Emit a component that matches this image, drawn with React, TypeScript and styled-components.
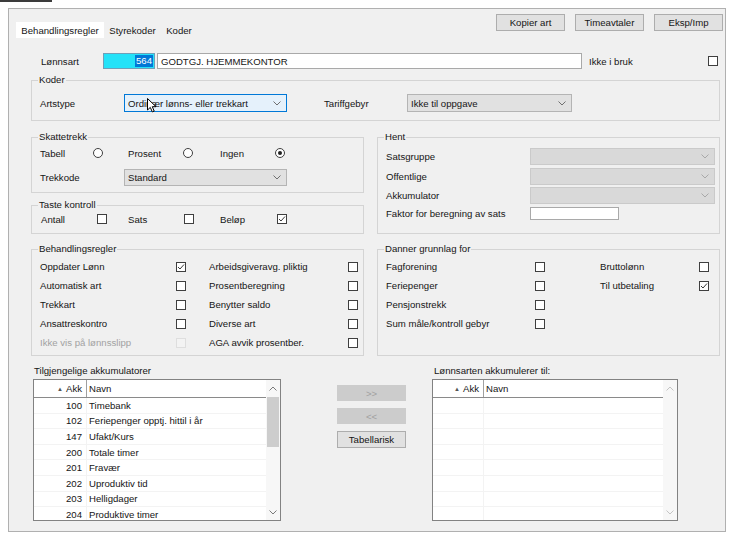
import React from "react";
import styled, { createGlobalStyle } from "styled-components";

const GlobalStyle = createGlobalStyle`
  html, body { margin: 0; padding: 0; background: #ffffff; }
  body {
    font-family: "Liberation Sans", Arial, sans-serif;
    font-size: 9.6px;
    color: #151515;
  }
  * { box-sizing: border-box; }
`;

const Screen = styled.div`
  width: 733px;
  height: 539px;
  overflow: hidden;
  background: #ffffff;
`;

const TitleStub = styled.div`
  width: 52px;
  height: 2px;
  background: #3c3c3c;
`;

const Window = styled.div`
  margin: 6px 0 0 8px;
  width: 718px;
  height: 524px;
  border: 1px solid #b0b0b0;
  background: #f0f0f0;
  display: flex;
  flex-direction: column;
`;

const Header = styled.div`
  display: flex;
  justify-content: space-between;
  align-items: flex-start;
  height: 29px;
  padding: 0 2px 0 7px;
`;

const Tabs = styled.div`
  display: flex;
  margin-top: 13px;
`;

const Tab = styled.div<{ $active?: boolean; $w: number }>`
  width: ${(p) => p.$w}px;
  height: 16px;
  display: flex;
  align-items: center;
  justify-content: center;
  background: ${(p) => (p.$active ? "#ffffff" : "transparent")};
`;

const Toolbar = styled.div`
  display: flex;
  gap: 10px;
  margin-top: 5px;
`;

const ToolButton = styled.button`
  width: 69px;
  height: 17px;
  padding: 0;
  border: 1px solid #adadad;
  background: #e1e1e1;
  font: inherit;
  color: #151515;
`;

const Content = styled.div`
  display: flex;
  flex-direction: column;
  padding: 0 5px 0 22px;
`;

const FieldRow = styled.div`
  display: flex;
  align-items: center;
  height: 16px;
  margin-top: 15px;
  padding-left: 10px;
`;

const RowLabel = styled.span<{ $w: number; $ml?: number }>`
  flex: none;
  width: ${(p) => p.$w}px;
  margin-left: ${(p) => p.$ml ?? 0}px;
  white-space: nowrap;
`;

const CodeInput = styled.div`
  flex: none;
  width: 52px;
  height: 16px;
  display: flex;
  align-items: center;
  justify-content: flex-end;
  padding-right: 1px;
  background: #24e2f8;
  border: 1px solid #6f9fb8;
`;

const SelectedText = styled.span`
  background: #0078d7;
  color: #ffffff;
  line-height: 12px;
  padding: 0 1px;
`;

const TextInput = styled.div<{ $w: number; $h?: number; $ml?: number }>`
  flex: none;
  width: ${(p) => p.$w}px;
  height: ${(p) => p.$h ?? 16}px;
  margin-left: ${(p) => p.$ml ?? 0}px;
  display: flex;
  align-items: center;
  padding-left: 3px;
  background: #ffffff;
  border: 1px solid #a9a9a9;
  white-space: nowrap;
`;

const Spacer = styled.span`
  flex: 1;
`;

const Group = styled.fieldset<{ $pt: number; $pb: number }>`
  margin: 0;
  min-width: 0;
  border: 1px solid #d4d4d4;
  padding: ${(p) => p.$pt}px 5px ${(p) => p.$pb}px 8px;
`;

const Legend = styled.legend`
  padding: 0 1px;
  margin-left: -2px;
  line-height: 12px;
  font-size: 9.6px;
`;

const KoderGroup = styled(Group)`
  margin-top: 5px;
`;

const InlineRow = styled.div<{ $h: number }>`
  display: flex;
  align-items: center;
  height: ${(p) => p.$h}px;
`;

type ComboVariant = "hover" | "normal" | "disabled";

const comboBg: Record<ComboVariant, string> = {
  hover: "#e5f1fb",
  normal: "#e1e1e1",
  disabled: "#d9d9d9",
};
const comboBorder: Record<ComboVariant, string> = {
  hover: "#0078d7",
  normal: "#b4b4b4",
  disabled: "#cacaca",
};

const ComboBox = styled.div<{ $w: number; $h: number; $v: ComboVariant }>`
  position: relative;
  flex: none;
  width: ${(p) => p.$w}px;
  height: ${(p) => p.$h}px;
  display: flex;
  align-items: center;
  justify-content: space-between;
  padding: 0 5px 0 3px;
  background: ${(p) => comboBg[p.$v]};
  border: 1px solid ${(p) => comboBorder[p.$v]};
  white-space: nowrap;
`;

const Cursor = styled.svg`
  position: absolute;
  left: 22px;
  top: 3px;
`;

const Chevron = ({ color = "#7a7a7a", up = false }: { color?: string; up?: boolean }) => (
  <svg width="8" height="5" viewBox="0 0 8 5">
    <polyline
      points={up ? "0.5,4.5 4,1 7.5,4.5" : "0.5,0.5 4,4 7.5,0.5"}
      fill="none"
      stroke={color}
      strokeWidth="1"
    />
  </svg>
);

const Combo = ({
  w,
  h,
  v,
  text,
  cursor,
}: {
  w: number;
  h: number;
  v: ComboVariant;
  text?: string;
  cursor?: boolean;
}) => (
  <ComboBox $w={w} $h={h} $v={v}>
    <span>{text}</span>
    <Chevron color={v === "disabled" ? "#a8a8a8" : "#6f6f6f"} />
    {cursor && (
      <Cursor width="11" height="15" viewBox="0 0 11 15">
        <path
          d="M0.5,0.5 L0.5,12 L3.3,9.4 L5.3,13.9 L7.2,13.1 L5.3,8.7 L9,8.7 Z"
          fill="#ffffff"
          stroke="#000000"
          strokeWidth="1"
          strokeLinejoin="round"
        />
      </Cursor>
    )}
  </ComboBox>
);

const Columns = styled.div<{ $mt: number }>`
  display: grid;
  grid-template-columns: 333px 343px;
  column-gap: 13px;
  margin-top: ${(p) => p.$mt}px;
  align-items: stretch;
`;

const Stack = styled.div`
  display: flex;
  flex-direction: column;
  gap: 6px;
`;

const OptionRow = styled.div<{ $pl?: number }>`
  display: flex;
  align-items: center;
  height: 14px;
  padding-left: ${(p) => p.$pl ?? 0}px;
`;

const OptionLabel = styled.span<{ $w: number }>`
  flex: none;
  width: ${(p) => p.$w}px;
`;

const OptionGap = styled.span<{ $w: number }>`
  flex: none;
  width: ${(p) => p.$w}px;
`;

const Box = styled.span<{ $disabled?: boolean }>`
  flex: none;
  width: 10px;
  height: 10px;
  display: inline-flex;
  align-items: center;
  justify-content: center;
  background: ${(p) => (p.$disabled ? "#f3f3f3" : "#ffffff")};
  border: 1px solid ${(p) => (p.$disabled ? "#dedede" : "#3f3f3f")};
`;

const CheckBox = ({ checked, disabled }: { checked?: boolean; disabled?: boolean }) => (
  <Box $disabled={disabled}>
    {checked && (
      <svg width="8" height="8" viewBox="0 0 8 8">
        <polyline points="1,4 3,6 7,1.5" fill="none" stroke="#3a3a3a" strokeWidth="1" />
      </svg>
    )}
  </Box>
);

const RadioCircle = styled.span`
  flex: none;
  width: 10px;
  height: 10px;
  border-radius: 50%;
  border: 1px solid #3f3f3f;
  background: #ffffff;
  display: inline-flex;
  align-items: center;
  justify-content: center;
`;

const RadioDot = styled.span`
  width: 4px;
  height: 4px;
  border-radius: 50%;
  background: #222;
`;

const Radio = ({ checked }: { checked?: boolean }) => (
  <RadioCircle>{checked && <RadioDot />}</RadioCircle>
);

const TrekkodeRow = styled(InlineRow)`
  margin-top: 9px;
`;

const HentRows = styled.div`
  display: flex;
  flex-direction: column;
  gap: 2.5px;
`;

const CheckGrid = styled.div<{ $cols: string }>`
  display: grid;
  grid-template-columns: ${(p) => p.$cols};
  grid-auto-rows: 19px;
  align-items: center;
`;

const GridLabel = styled.span<{ $disabled?: boolean }>`
  white-space: nowrap;
  color: ${(p) => (p.$disabled ? "#a2a2a2" : "#151515")};
`;

const Empty = styled.span``;

const ListsRow = styled.div`
  display: flex;
  align-items: flex-start;
  margin-top: 9px;
`;

const ListColumn = styled.div<{ $ml: number }>`
  display: flex;
  flex-direction: column;
  margin-left: ${(p) => p.$ml}px;
`;

const ListCaption = styled.div<{ $pl: number }>`
  height: 12px;
  line-height: 12px;
  margin-bottom: 2px;
  padding-left: ${(p) => p.$pl}px;
`;

const ListBox = styled.div<{ $w: number }>`
  width: ${(p) => p.$w}px;
  height: 142px;
  display: flex;
  overflow: hidden;
  background: #ffffff;
  border: 1px solid #828282;
`;

const ListMain = styled.div`
  flex: 1;
  min-width: 0;
  display: flex;
  flex-direction: column;
  overflow: hidden;
`;

const ListHeader = styled.div`
  flex: none;
  height: 18px;
  display: flex;
  border-bottom: 1px solid #8a8a8a;
`;

const HeadAkk = styled.div<{ $w: number }>`
  flex: none;
  width: ${(p) => p.$w}px;
  display: flex;
  align-items: center;
  justify-content: flex-end;
  gap: 3px;
  padding-right: 4px;
  border-right: 1px solid #a0a0a0;
`;

const HeadName = styled.div`
  flex: 1;
  display: flex;
  align-items: center;
  padding-left: 2px;
`;

const SortMark = styled.span`
  font-size: 6px;
  color: #555;
`;

const ListRowEl = styled.div`
  flex: none;
  height: 15.6px;
  display: flex;
  border-bottom: 1px solid #f3f3f3;
`;

const AkkCell = styled.div<{ $w: number }>`
  flex: none;
  width: ${(p) => p.$w}px;
  display: flex;
  align-items: center;
  justify-content: flex-end;
  padding-right: 4px;
  border-right: 1px solid #f3f3f3;
`;

const NameCell = styled.div`
  flex: 1;
  display: flex;
  align-items: center;
  padding-left: 2px;
  white-space: nowrap;
`;

const ScrollBar = styled.div`
  flex: none;
  width: 14px;
  display: flex;
  flex-direction: column;
  background: #f7f7f7;
`;

const ScrollArrow = styled.div<{ $h: number }>`
  flex: none;
  height: ${(p) => p.$h}px;
  display: flex;
  align-items: center;
  justify-content: center;
`;

const Track = styled.div`
  flex: 1;
`;

const Thumb = styled.div`
  height: 50px;
  margin: 0 1px;
  background: #cdcdcd;
`;

const MoveColumn = styled.div`
  display: flex;
  flex-direction: column;
  gap: 7px;
  margin: 20px 0 0 56px;
`;

const MoveButton = styled.button<{ $disabled?: boolean; $h: number }>`
  width: 69px;
  height: ${(p) => p.$h}px;
  padding: 0;
  font: inherit;
  background: ${(p) => (p.$disabled ? "#cccccc" : "#e1e1e1")};
  border: 1px solid ${(p) => (p.$disabled ? "#cccccc" : "#adadad")};
  color: ${(p) => (p.$disabled ? "#a0a0a0" : "#151515")};
`;

type Acc = { akk: string; navn: string };

const accumulators: Acc[] = [
  { akk: "100", navn: "Timebank" },
  { akk: "102", navn: "Feriepenger opptj. hittil i år" },
  { akk: "147", navn: "Ufakt/Kurs" },
  { akk: "200", navn: "Totale timer" },
  { akk: "201", navn: "Fravær" },
  { akk: "202", navn: "Uproduktiv tid" },
  { akk: "203", navn: "Helligdager" },
  { akk: "204", navn: "Produktive timer" },
];

const emptyRows: Acc[] = Array.from({ length: 8 }, () => ({ akk: "", navn: "" }));

const AccList = ({
  w,
  akkW,
  rows,
  thumb,
}: {
  w: number;
  akkW: number;
  rows: Acc[];
  thumb?: boolean;
}) => {
  const arrow = thumb ? "#7a7a7a" : "#c4c4c4";
  return (
    <ListBox $w={w}>
      <ListMain>
        <ListHeader>
          <HeadAkk $w={akkW}>
            <SortMark>▲</SortMark>
            <span>Akk</span>
          </HeadAkk>
          <HeadName>Navn</HeadName>
        </ListHeader>
        {rows.map((r, i) => (
          <ListRowEl key={i}>
            <AkkCell $w={akkW}>{r.akk}</AkkCell>
            <NameCell>{r.navn}</NameCell>
          </ListRowEl>
        ))}
      </ListMain>
      <ScrollBar>
        <ScrollArrow $h={17}>
          <Chevron up color={arrow} />
        </ScrollArrow>
        <Track>{thumb && <Thumb />}</Track>
        <ScrollArrow $h={16}>
          <Chevron color={arrow} />
        </ScrollArrow>
      </ScrollBar>
    </ListBox>
  );
};

type Rule = { label: string; checked?: boolean; disabled?: boolean };

const behLeft: Rule[] = [
  { label: "Oppdater Lønn", checked: true },
  { label: "Automatisk art" },
  { label: "Trekkart" },
  { label: "Ansattreskontro" },
  { label: "Ikke vis på lønnsslipp", disabled: true },
];
const behRight: Rule[] = [
  { label: "Arbeidsgiveravg. pliktig" },
  { label: "Prosentberegning" },
  { label: "Benytter saldo" },
  { label: "Diverse art" },
  { label: "AGA avvik prosentber." },
];

const danLeft: Rule[] = [
  { label: "Fagforening" },
  { label: "Feriepenger" },
  { label: "Pensjonstrekk" },
  { label: "Sum måle/kontroll gebyr" },
];
const danRight: (Rule | null)[] = [
  { label: "Bruttolønn" },
  { label: "Til utbetaling", checked: true },
  null,
  null,
];

const RuleCells = ({ rule }: { rule: Rule | null }) =>
  rule ? (
    <>
      <GridLabel $disabled={rule.disabled}>{rule.label}</GridLabel>
      <CheckBox checked={rule.checked} disabled={rule.disabled} />
    </>
  ) : (
    <>
      <Empty />
      <Empty />
    </>
  );

export default function App() {
  return (
    <Screen>
      <GlobalStyle />
      <TitleStub />
      <Window>
        <Header>
          <Tabs>
            <Tab $active $w={88}>Behandlingsregler</Tab>
            <Tab $w={57}>Styrekoder</Tab>
            <Tab $w={36}>Koder</Tab>
          </Tabs>
          <Toolbar>
            <ToolButton>Kopier art</ToolButton>
            <ToolButton>Timeavtaler</ToolButton>
            <ToolButton>Eksp/Imp</ToolButton>
          </Toolbar>
        </Header>

        <Content>
          <FieldRow>
            <RowLabel $w={62}>Lønnsart</RowLabel>
            <CodeInput>
              <SelectedText>564</SelectedText>
            </CodeInput>
            <TextInput $w={425} $ml={2}>
              GODTGJ. HJEMMEKONTOR
            </TextInput>
            <RowLabel $w={80} $ml={7}>
              Ikke i bruk
            </RowLabel>
            <Spacer />
            <CheckBox />
            <OptionGap $w={2} />
          </FieldRow>

          <KoderGroup $pt={8} $pb={8}>
            <Legend>Koder</Legend>
            <InlineRow $h={18}>
              <RowLabel $w={84}>Artstype</RowLabel>
              <Combo w={163} h={18} v="hover" text="Ordinær lønns- eller trekkart" cursor />
              <RowLabel $w={83} $ml={37}>
                Tariffgebyr
              </RowLabel>
              <Combo w={165} h={18} v="normal" text="Ikke til oppgave" />
            </InlineRow>
          </KoderGroup>

          <Columns $mt={10}>
            <Stack>
              <Group $pt={3} $pb={6}>
                <Legend>Skattetrekk</Legend>
                <OptionRow>
                  <OptionLabel $w={53}>Tabell</OptionLabel>
                  <Radio />
                  <OptionGap $w={25} />
                  <OptionLabel $w={55}>Prosent</OptionLabel>
                  <Radio />
                  <OptionGap $w={27} />
                  <OptionLabel $w={55}>Ingen</OptionLabel>
                  <Radio checked />
                </OptionRow>
                <TrekkodeRow $h={17}>
                  <RowLabel $w={84}>Trekkode</RowLabel>
                  <Combo w={163} h={17} v="normal" text="Standard" />
                </TrekkodeRow>
              </Group>
              <Group $pt={1} $pb={7}>
                <Legend>Taste kontroll</Legend>
                <OptionRow $pl={1}>
                  <OptionLabel $w={56}>Antall</OptionLabel>
                  <CheckBox />
                  <OptionGap $w={21} />
                  <OptionLabel $w={56}>Sats</OptionLabel>
                  <CheckBox />
                  <OptionGap $w={26} />
                  <OptionLabel $w={57}>Beløp</OptionLabel>
                  <CheckBox checked />
                </OptionRow>
              </Group>
            </Stack>

            <Group $pt={5} $pb={0}>
              <Legend>Hent</Legend>
              <HentRows>
                <InlineRow $h={17}>
                  <RowLabel $w={144}>Satsgruppe</RowLabel>
                  <Combo w={185} h={17} v="disabled" />
                </InlineRow>
                <InlineRow $h={17}>
                  <RowLabel $w={144}>Offentlige</RowLabel>
                  <Combo w={185} h={17} v="disabled" />
                </InlineRow>
                <InlineRow $h={17}>
                  <RowLabel $w={144}>Akkumulator</RowLabel>
                  <Combo w={185} h={17} v="disabled" />
                </InlineRow>
                <InlineRow $h={13}>
                  <RowLabel $w={144}>Faktor for beregning av sats</RowLabel>
                  <TextInput $w={89} $h={13} />
                </InlineRow>
              </HentRows>
            </Group>
          </Columns>

          <Columns $mt={9}>
            <Group $pt={2} $pb={3}>
              <Legend>Behandlingsregler</Legend>
              <CheckGrid $cols="136px 10px 23px 139px 10px">
                {behLeft.map((l, i) => (
                  <React.Fragment key={i}>
                    <RuleCells rule={l} />
                    <Empty />
                    <RuleCells rule={behRight[i]} />
                  </React.Fragment>
                ))}
              </CheckGrid>
            </Group>
            <Group $pt={2} $pb={3}>
              <Legend>Danner grunnlag for</Legend>
              <CheckGrid $cols="149px 10px 55px 99px 10px">
                {danLeft.map((l, i) => (
                  <React.Fragment key={i}>
                    <RuleCells rule={l} />
                    <Empty />
                    <RuleCells rule={danRight[i]} />
                  </React.Fragment>
                ))}
              </CheckGrid>
            </Group>
          </Columns>

          <ListsRow>
            <ListColumn $ml={2}>
              <ListCaption $pl={1}>Tilgjengelige akkumulatorer</ListCaption>
              <AccList w={248} akkW={53} rows={accumulators} thumb />
            </ListColumn>
            <MoveColumn>
              <MoveButton $disabled $h={16}>&gt;&gt;</MoveButton>
              <MoveButton $disabled $h={16}>&lt;&lt;</MoveButton>
              <MoveButton $h={17}>Tabellarisk</MoveButton>
            </MoveColumn>
            <ListColumn $ml={26}>
              <ListCaption $pl={2}>Lønnsarten akkumulerer til:</ListCaption>
              <AccList w={246} akkW={51} rows={emptyRows} />
            </ListColumn>
          </ListsRow>
        </Content>
      </Window>
    </Screen>
  );
}
